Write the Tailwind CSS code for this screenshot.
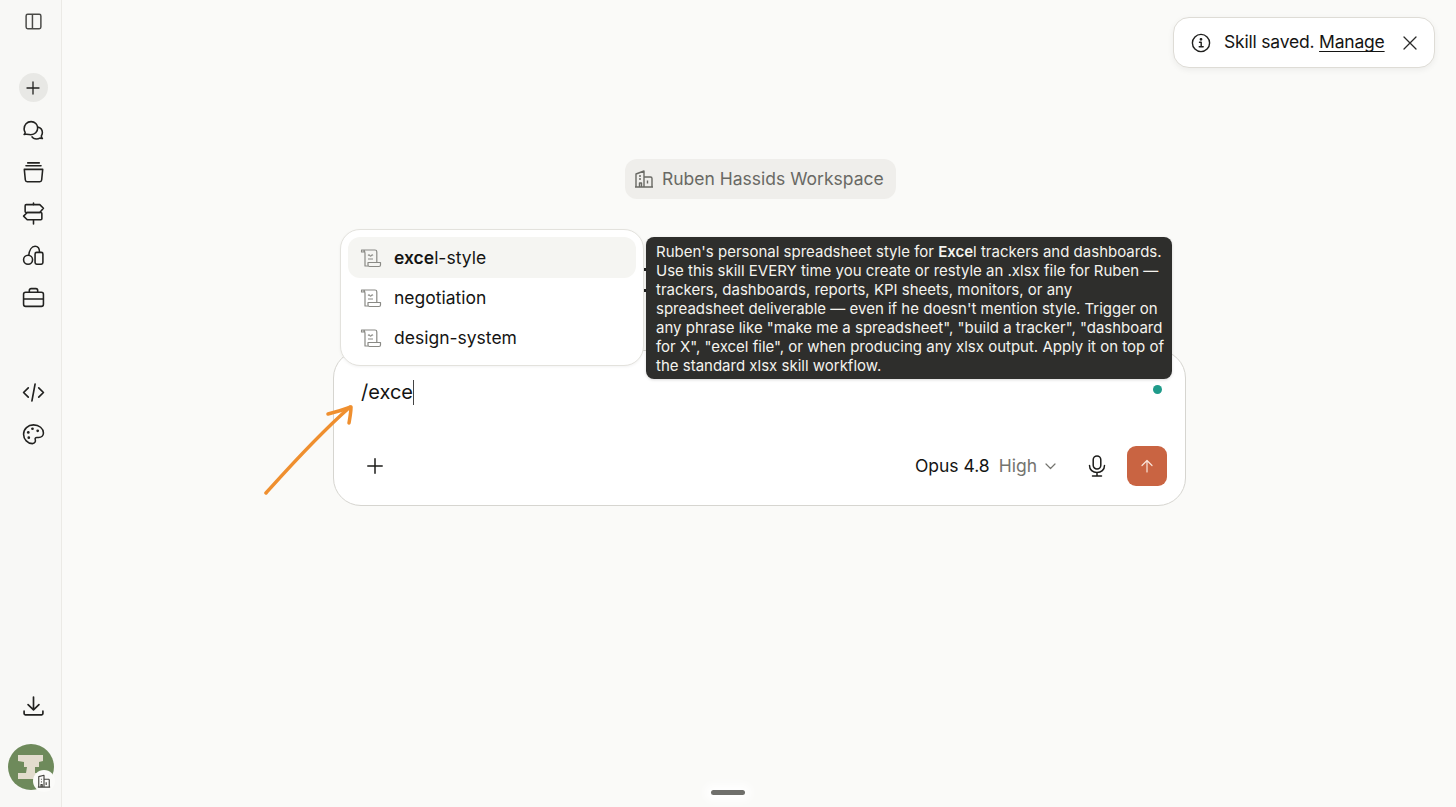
<!DOCTYPE html>
<html lang="en">
<head>
<meta charset="utf-8">
<title>Skill picker</title>
<script src="https://cdn.jsdelivr.net/npm/@tailwindcss/browser@4"></script>
</head>
<body class="m-0 overflow-hidden bg-[#fafaf8] font-['Inter','Liberation_Sans',sans-serif] text-[#141413]">
<div class="flex h-[807px] w-[1456px]">
  <!-- Sidebar -->
  <aside class="flex h-full w-[62px] shrink-0 flex-col items-center border-r border-[#ebeae6] bg-[#f8f8f6] pl-[5px] text-[#222220]">
    <div class="mt-[11px] flex h-[21px] w-[21px] items-center justify-center">
      <svg width="19" height="19" viewBox="0 0 18 18" fill="none" stroke="currentColor" stroke-width="1.4"><rect x="2" y="2.200" width="14" height="13.600" rx="1.500" stroke="#4a4a47"/><path d="M8 2.200v13.600" stroke="#4a4a47"/></svg>
    </div>
    <div class="mt-[41px] flex h-[29px] w-[29px] items-center justify-center rounded-full bg-[#e8e8e5]">
      <svg width="14" height="14" viewBox="0 0 14 14" fill="none" stroke="currentColor" stroke-width="1.300" stroke-linecap="round"><path d="M7 1v12M1 7h12"/></svg>
    </div>
    <div class="mt-[17px] flex h-[22px] items-center">
      <svg width="23" height="23" viewBox="0 0 22 22" fill="none" stroke="currentColor" stroke-width="1.500" stroke-linejoin="round"><path d="M3.600 14.500 2 14.800c.6-.6 1-1.300 1-2A7 7 0 0 1 2 9.500C2 5.800 4.700 2.500 8.700 2.500c3.700 0 6.300 2.800 6.300 6.200 0 3.600-2.800 6.300-6.500 6.300-1.900 0-3.500-.3-4.900-.5Z"/><path d="M15.300 7.700c2.500.8 4.200 2.900 4.200 5.300 0 1.200-.4 2.300-1 3.200 0 .9.400 1.800 1 2.500l-2.400-.4c-1 .6-2 .9-3.200.9-1.900 0-3.700-.9-4.700-2.500"/></svg>
    </div>
    <div class="mt-[20px] flex h-[22px] items-center">
      <svg width="23" height="23" viewBox="0 0 22 22" fill="none" stroke="currentColor" stroke-width="1.500" stroke-linecap="round" stroke-linejoin="round"><path d="M5.500 1.800h11M3.800 4.600h14.400"/><path d="M2.200 8h17.600l-1 10.200a1.800 1.800 0 0 1-1.800 1.600H5a1.800 1.800 0 0 1-1.800-1.600Z"/></svg>
    </div>
    <div class="mt-[19px] flex h-[22px] items-center">
      <svg width="23" height="23" viewBox="0 0 22 22" fill="none" stroke="currentColor" stroke-width="1.500" stroke-linejoin="round" stroke-linecap="round"><path d="M4 2.500h13L20.500 6 17 10H4a1 1 0 0 1-1-1V3.500a1 1 0 0 1 1-1Z"/><path d="M18 10H5L1.500 13.500 5 17h13a1 1 0 0 0 1-1v-5a1 1 0 0 0-1-1Z"/><path d="M11 1v1.500M11 17v4"/></svg>
    </div>
    <div class="mt-[20px] flex h-[22px] items-center">
      <svg width="23" height="23" viewBox="0 0 22 22" fill="none" stroke="currentColor" stroke-width="1.500" stroke-linejoin="round"><circle cx="5.800" cy="15" r="4.300"/><path d="M6.500 10.800C7 6 9.300 2.200 12.500 2.200c2.700 0 4.300 2 4.300 5.800"/><rect x="12.500" y="8" width="7.500" height="11.300" rx="1.500"/></svg>
    </div>
    <div class="mt-[20px] flex h-[22px] items-center">
      <svg width="23" height="23" viewBox="0 0 22 22" fill="none" stroke="currentColor" stroke-width="1.500" stroke-linejoin="round"><rect x="1.500" y="6" width="19" height="13.500" rx="2"/><path d="M7 6V4.200c0-1 .8-1.700 1.700-1.700h4.600c.9 0 1.700.7 1.700 1.700V6M1.500 12.500h19"/></svg>
    </div>
    <div class="mt-[73px] flex h-[22px] items-center">
      <svg width="23" height="23" viewBox="0 0 22 22" fill="none" stroke="currentColor" stroke-width="1.600" stroke-linecap="round" stroke-linejoin="round"><path d="M6 6.500 1.500 11 6 15.500M16 6.500l4.500 4.500-4.500 4.500M12.500 3l-3 16"/></svg>
    </div>
    <div class="mt-[20px] flex h-[22px] items-center">
      <svg width="23" height="23" viewBox="0 0 22 22" fill="none" stroke="currentColor" stroke-width="1.500" stroke-linejoin="round"><path d="M11 1.800c5.400 0 9.500 3.500 9.500 7.700 0 2.600-2 4.300-4.500 4.300h-1.800c-1.300 0-2 1-1.500 2.200.5 1.400-.3 3.700-2.700 3.700C5.500 19.700 1.500 15.700 1.500 10.700 1.500 5.700 5.700 1.800 11 1.800Z"/><circle cx="6" cy="9" r="1.300" fill="currentColor" stroke="none"/><circle cx="10" cy="5.500" r="1.300" fill="currentColor" stroke="none"/><circle cx="15" cy="7.500" r="1.300" fill="currentColor" stroke="none"/><circle cx="6.500" cy="14" r="1.300" fill="currentColor" stroke="none"/></svg>
    </div>
    <div class="mt-auto flex h-[22px] items-center">
      <svg width="23" height="23" viewBox="0 0 22 22" fill="none" stroke="currentColor" stroke-width="1.600" stroke-linecap="round" stroke-linejoin="round"><path d="M11 2v12M5.800 9.200 11 14.200l5.200-5M2 15.500v2.300c0 .7.500 1.200 1.200 1.200h15.600c.7 0 1.200-.5 1.200-1.200v-2.300"/></svg>
    </div>
    <div class="relative mt-[27px] mb-[17px] ml-[-5px] h-[46px] w-[46px] rounded-full bg-[#6e8a5b]">
      <svg width="46" height="46" viewBox="0 0 46 46" fill="#e2dccd"><path d="M10 11h25v6l-4 1v5h-4v6h2v6H10v-6h8l1-6h-3v-5l-6-1Z"/></svg>
      <div class="absolute right-[-1px] bottom-[-2px] flex h-[22px] w-[22px] items-center justify-center rounded-full bg-[#fbfbf9] text-[#44443f]">
        <svg width="14" height="14" viewBox="0 0 16 16" fill="none" stroke="currentColor" stroke-width="1.300" stroke-linejoin="round"><path d="M2 15V3l6-1.500V15M8 6h5.500a.8.800 0 0 1 .5.800V15M1 15h14M4.500 6h1M4.500 9h1M4.500 15v-3h1.500v3M10.500 9.500v3"/></svg>
      </div>
    </div>
  </aside>

  <!-- Main -->
  <main class="relative flex h-full flex-1 flex-col items-center pt-[159px]">
    <!-- Toast -->
    <div class="absolute top-[17px] right-[21px] flex h-[51px] w-[262px] items-center rounded-[16px] border border-[#dedcd6] bg-white pl-[17px] shadow-[0_2px_6px_rgba(0,0,0,0.06)]">
      <svg class="shrink-0" width="20" height="20" viewBox="0 0 20 20" fill="none" stroke="#1f1f1d" stroke-width="1.400" stroke-linecap="round" stroke-linejoin="round"><circle cx="10" cy="10" r="8.600"/><path d="M8.500 9.200H10.200V13.800M8.200 13.800H12.200"/><circle cx="10" cy="6.300" r="0.700" fill="#1f1f1d"/></svg>
      <span class="ml-[13px] text-[17.5px] tracking-[-0.2px] whitespace-nowrap">Skill saved. <span class="underline underline-offset-[3px]">Manage</span></span>
      <svg class="ml-[18px] shrink-0" width="14" height="14" viewBox="0 0 14 14" fill="none" stroke="#2a2a28" stroke-width="1.300" stroke-linecap="round"><path d="M1 1l12 12M13 1 1 13"/></svg>
    </div>

    <!-- Workspace chip -->
    <div class="ml-[3px] flex h-[40px] w-[271px] items-center gap-[8px] rounded-[12px] bg-[#efeeeb] pl-[9px] text-[#696964]">
      <svg class="shrink-0" width="20" height="20" viewBox="0 0 20 20" fill="none" stroke="currentColor" stroke-width="1.400" stroke-linejoin="round"><path d="M2 18V5l8-3v16M10 8h6.500a1.500 1.500 0 0 1 1.500 1.500V18M1 18h18M5 7h2M5 10h2M5.500 18v-4h2v4M13.500 11.500v3"/></svg>
      <span class="text-[17.5px] leading-none whitespace-nowrap">Ruben Hassids Workspace</span>
    </div>

    <!-- Composer -->
    <div class="relative mt-[151px] ml-[1px] flex h-[156px] w-[853px] flex-col rounded-[28px] border border-[#d6d5d0] bg-white pr-[18px] pl-[27px]">
      <!-- Slash menu -->
      <div class="absolute bottom-[139px] left-[6px] z-10 flex w-[304px] flex-col rounded-[20px] border border-[#e3e2dd] bg-white px-[7px] py-[7px] shadow-[0_1px_3px_rgba(0,0,0,0.05)]">
        <div class="flex h-[41px] items-center gap-[12px] rounded-[12px] bg-[#f5f5f2] pl-[12px]">
          <svg class="shrink-0" width="22" height="22" viewBox="0 0 22 22" fill="none" stroke="#8a8a85" stroke-width="1.200" stroke-linejoin="round"><path d="M1.500 3h2.500v2H1.500c0-1 0-2 1-2ZM3 3h12c1 0 1.800.8 1.800 1.800V15M4.200 3.500C5 4.500 5 5.500 5 6.500V19h3"/><path d="M8 15.500h12.500v2.500a1.500 1.500 0 0 1-1.500 1.500H9.500A1.500 1.500 0 0 1 8 18Z"/><path d="M8 8.500c.8-.8 1.200-.8 1.800 0 .6.800 1 .8 1.600 0 .6-.8 1-.8 1.600 0M8 12h5"/></svg>
          <span class="text-[17.5px] leading-none"><b class="font-semibold">exce</b>l-style</span>
        </div>
        <div class="flex h-[40px] items-center gap-[12px] pl-[12px]">
          <svg class="shrink-0" width="22" height="22" viewBox="0 0 22 22" fill="none" stroke="#8a8a85" stroke-width="1.200" stroke-linejoin="round"><path d="M1.500 3h2.500v2H1.500c0-1 0-2 1-2ZM3 3h12c1 0 1.800.8 1.800 1.800V15M4.200 3.500C5 4.500 5 5.500 5 6.500V19h3"/><path d="M8 15.500h12.500v2.500a1.500 1.500 0 0 1-1.500 1.500H9.500A1.500 1.500 0 0 1 8 18Z"/><path d="M8 8.500c.8-.8 1.200-.8 1.800 0 .6.800 1 .8 1.600 0 .6-.8 1-.8 1.600 0M8 12h5"/></svg>
          <span class="text-[17.5px] leading-none">negotiation</span>
        </div>
        <div class="flex h-[40px] items-center gap-[12px] pl-[12px]">
          <svg class="shrink-0" width="22" height="22" viewBox="0 0 22 22" fill="none" stroke="#8a8a85" stroke-width="1.200" stroke-linejoin="round"><path d="M1.500 3h2.500v2H1.500c0-1 0-2 1-2ZM3 3h12c1 0 1.800.8 1.800 1.800V15M4.200 3.500C5 4.500 5 5.500 5 6.500V19h3"/><path d="M8 15.500h12.500v2.500a1.500 1.500 0 0 1-1.500 1.500H9.500A1.500 1.500 0 0 1 8 18Z"/><path d="M8 8.500c.8-.8 1.200-.8 1.800 0 .6.800 1 .8 1.600 0 .6-.8 1-.8 1.600 0M8 12h5"/></svg>
          <span class="text-[17.5px] leading-none">design-system</span>
        </div>
      </div>
      <!-- Stray glyphs of text hidden behind overlays -->
      <div class="absolute top-[-83px] left-[309px] flex h-[24px] w-[3px] flex-col justify-between">
        <span class="block h-[3px] w-[3px] bg-[#222]"></span>
        <span class="block h-[3px] w-[3px] bg-[#222]"></span>
      </div>
      <!-- Tooltip -->
      <div class="absolute top-[-114px] left-[312px] z-20 w-[526px] rounded-[8px] bg-[#2e2e2c] px-[10px] pt-[5px] pb-[4px] text-[15px] leading-[19px] whitespace-nowrap text-[#f4f3ee] shadow-[0_1px_3px_rgba(0,0,0,0.15)]">
        <p>Ruben's personal spreadsheet style for <b class="font-semibold">Exce</b>l trackers and dashboards.<br>Use this skill EVERY time you create or restyle an .xlsx file for Ruben —<br>trackers, dashboards, reports, KPI sheets, monitors, or any<br>spreadsheet deliverable — even if he doesn't mention style. Trigger on<br>any phrase like "make me a spreadsheet", "build a tracker", "dashboard<br>for X", "excel file", or when producing any xlsx output. Apply it on top of<br>the standard xlsx skill workflow.</p>
      </div>

      <div class="mt-[27px] flex h-[28px] items-center text-[20px] leading-none">
        <span>/exce</span><span class="h-[25px] w-[1.500px] bg-[#444]"></span>
      </div>
      <span class="absolute top-[34px] right-[23px] h-[9px] w-[9px] rounded-full bg-[#1f9b8a]"></span>

      <div class="mt-[40px] flex h-[40px] items-center">
        <svg class="ml-[6px] shrink-0" width="16" height="16" viewBox="0 0 16 16" fill="none" stroke="#1c1c1a" stroke-width="1.500" stroke-linecap="round"><path d="M8 .8v14.400M.8 8h14.400"/></svg>
        <span class="ml-auto text-[17.5px] leading-none whitespace-nowrap">Opus 4.8</span>
        <span class="ml-[9px] text-[17.5px] leading-none text-[#74746f]">High</span>
        <svg class="ml-[8px] shrink-0" width="11" height="7" viewBox="0 0 11 7" fill="none" stroke="#74746f" stroke-width="1.200" stroke-linecap="round" stroke-linejoin="round"><path d="M1 1l4.500 4.500L10 1"/></svg>
        <svg class="ml-[32px] shrink-0" width="18" height="22" viewBox="0 0 18 22" fill="none" stroke="#1c1c1a" stroke-width="1.500" stroke-linecap="round" stroke-linejoin="round"><rect x="5.200" y="1" width="7.600" height="13" rx="3.800"/><path d="M1.500 10.500c0 4.300 3.300 7 7.500 7s7.500-2.700 7.500-7M9 17.500V21M4.500 21h9"/></svg>
        <div class="ml-[21px] flex h-[40px] w-[40px] shrink-0 items-center justify-center rounded-[9px] bg-[#c96442]">
          <svg width="14" height="14" viewBox="0 0 14 14" fill="none" stroke="#f9e4da" stroke-width="1.200" stroke-linecap="round" stroke-linejoin="round"><path d="M7 13V1.500M2 6.500l5-5 5 5"/></svg>
        </div>
      </div>

      <!-- Hand-drawn arrow over the composer edge -->
      <svg class="absolute top-[52px] left-[-70px] z-30" width="92" height="92" viewBox="0 0 92 92" fill="none" stroke="#ef8f2f" stroke-width="3.500" stroke-linecap="round" stroke-linejoin="round"><path d="M2 90C20 70 52 34 86 4"/><path d="M64 11C72 9 79 7 87 4 87 9 86 14 85 20"/></svg>
    </div>

    <!-- Bottom handle -->
    <div class="absolute bottom-[12px] left-[649px] h-[5px] w-[34px] rounded-full bg-[#6f6f6b] shadow-[0_0_8px_6px_rgba(255,255,255,0.9)]"></div>
  </main>
</div>
</body>
</html>
